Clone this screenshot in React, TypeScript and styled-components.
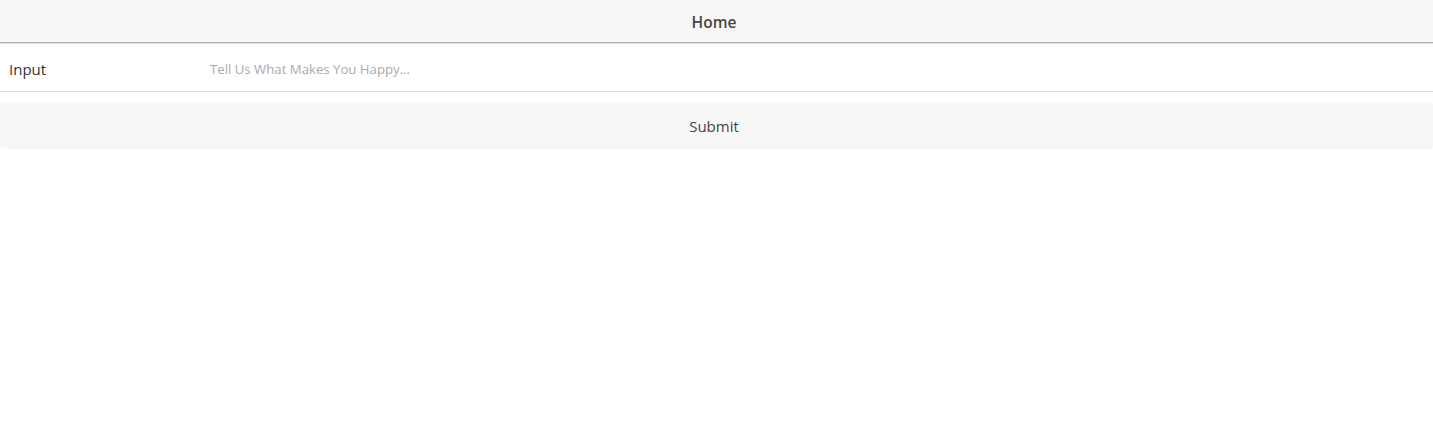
import React from "react";
import styled, { createGlobalStyle } from "styled-components";

const GlobalStyle = createGlobalStyle`
  body {
    margin: 0;
    background: #ffffff;
    font-family: "Open Sans", "Noto Sans", sans-serif;
    color: #333333;
  }
`;

const Page = styled.div`
  display: flex;
  flex-direction: column;
  width: 100%;
`;

const Header = styled.header`
  display: flex;
  align-items: center;
  justify-content: center;

  height: 43px;
  padding: 2px 5px 0 0;
  box-sizing: border-box;

  background: #f7f7f7;
  border-bottom: 1px solid #acacac;
  box-shadow: 0 1px 0 #dcdcdc;

  font-size: 15.5px;
  font-weight: 600;
  color: #454545;
`;

const Row = styled.label`
  display: grid;
  grid-template-columns: 201px 1fr;
  align-items: center;

  height: 48px;
  padding-left: 9px;
  padding-top: 2px;
  box-sizing: border-box;

  border-bottom: 1px solid #dddddd;
  margin-top: 1px;
`;

const Label = styled.span`
  font-size: 15px;
  color: #333333;
`;

const Field = styled.input`
  border: none;
  outline: none;
  padding: 0;
  background: transparent;

  font-family: inherit;
  font-size: 13.2px;
  color: #333333;

  &::placeholder {
    color: #aaaaaa;
  }
`;

const Submit = styled.button`
  height: 47px;
  margin-top: 10px;
  padding: 1px 5px 0 0;

  border: none;
  border-radius: 3px;
  background: #f7f7f7;

  font-family: inherit;
  font-size: 15px;
  color: #444444;
  cursor: pointer;
`;

export default function App() {
  return (
    <Page>
      <GlobalStyle />
      <Header>Home</Header>
      <Row>
        <Label>Input</Label>
        <Field placeholder="Tell Us What Makes You Happy..." />
      </Row>
      <Submit>Submit</Submit>
    </Page>
  );
}
